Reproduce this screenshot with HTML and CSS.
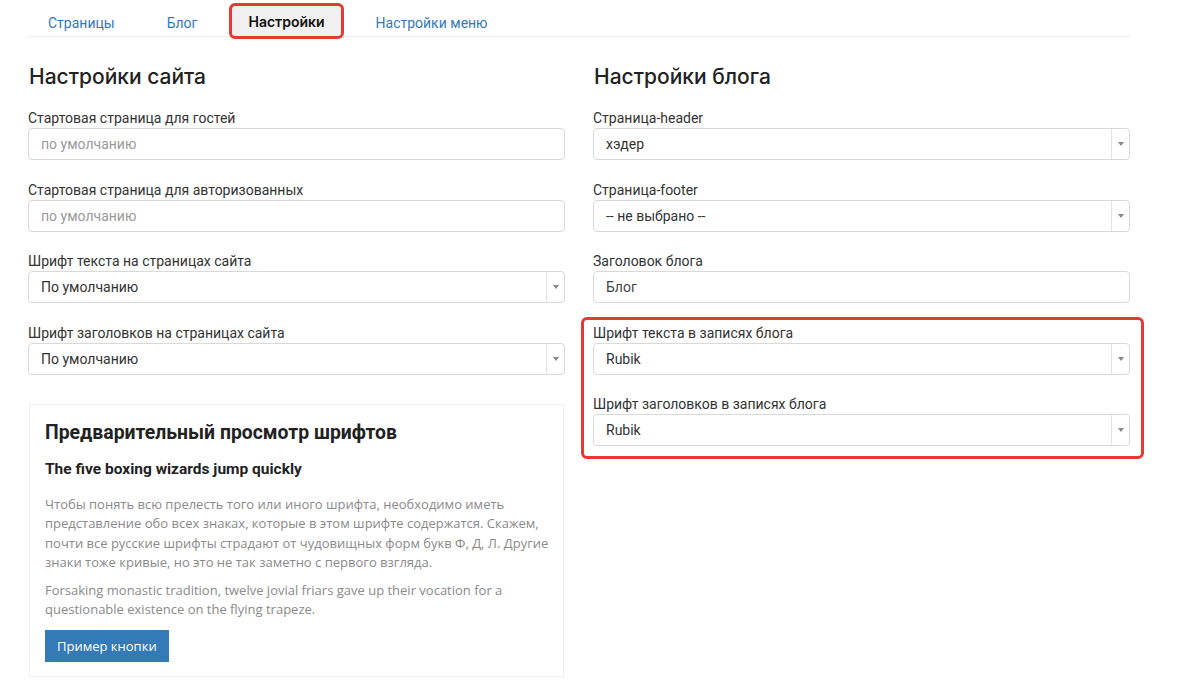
FILE: index.html
```html
<!DOCTYPE html>
<html lang="ru">
<head>
    <meta charset="UTF-8">
    <title>Настройки</title>
    <link rel="stylesheet" href="styles.css">
</head>
<body>
    <div class="container">
        <div class="tabs">
            <a class="tab" href="#">Страницы</a>
            <a class="tab" href="#">Блог</a>
            <a class="tab active" href="#">Настройки</a>
            <a class="tab" href="#">Настройки меню</a>
        </div>

        <div class="columns">
            <div class="column">
                <h2>Настройки сайта</h2>

                <div class="form-group">
                    <label>Стартовая страница для гостей</label>
                    <div class="input placeholder">по умолчанию</div>
                </div>

                <div class="form-group">
                    <label>Стартовая страница для авторизованных</label>
                    <div class="input placeholder">по умолчанию</div>
                </div>

                <div class="form-group">
                    <label>Шрифт текста на страницах сайта</label>
                    <div class="select"><span>По умолчанию</span><i class="arrow"></i></div>
                </div>

                <div class="form-group">
                    <label>Шрифт заголовков на страницах сайта</label>
                    <div class="select"><span>По умолчанию</span><i class="arrow"></i></div>
                </div>

                <div class="preview">
                    <h3>Предварительный просмотр шрифтов</h3>
                    <h4>The five boxing wizards jump quickly</h4>
                    <p>Чтобы понять всю прелесть того или иного шрифта, необходимо иметь представление обо всех знаках, которые в этом шрифте содержатся. Скажем, почти все русские шрифты страдают от чудовищных форм букв Ф, Д, Л. Другие знаки тоже кривые, но это не так заметно с первого взгляда.</p>
                    <p>Forsaking monastic tradition, twelve jovial friars gave up their vocation for a questionable existence on the flying trapeze.</p>
                    <button class="btn">Пример кнопки</button>
                </div>
            </div>

            <div class="column">
                <h2>Настройки блога</h2>

                <div class="form-group">
                    <label>Страница-header</label>
                    <div class="select"><span>хэдер</span><i class="arrow"></i></div>
                </div>

                <div class="form-group">
                    <label>Страница-footer</label>
                    <div class="select"><span>-- не выбрано --</span><i class="arrow"></i></div>
                </div>

                <div class="form-group">
                    <label>Заголовок блога</label>
                    <div class="input value">Блог</div>
                </div>

                <div class="highlight">
                    <div class="form-group">
                        <label>Шрифт текста в записях блога</label>
                        <div class="select"><span>Rubik</span><i class="arrow"></i></div>
                    </div>

                    <div class="form-group">
                        <label>Шрифт заголовков в записях блога</label>
                        <div class="select"><span>Rubik</span><i class="arrow"></i></div>
                    </div>
                </div>
            </div>
        </div>
    </div>
</body>
</html>
```

FILE: styles.css
```css
body {
    margin: 0;
    font-family: Roboto, "Noto Sans", sans-serif;
    font-size: 14px;
    color: #333;
    background: #fff;
}

.container {
    width: 1102px;
    padding-left: 28px;
}

.tabs {
    display: flex;
    gap: 12px;
    padding-top: 3px;
    height: 33px;
    border-bottom: 1px solid #ececec;
}

.tab {
    display: flex;
    align-items: center;
    height: 36px;
    box-sizing: border-box;
    padding: 3px 20px 0;
    color: #337ab7;
    text-decoration: none;
    font-size: 14px;
}

.tab.active {
    background: #f0f0f0;
    color: #111;
    font-family: Inter, sans-serif;
    font-weight: 600;
    border: 3px solid #e53a32;
    border-radius: 6px;
    padding: 1px 16px 0;
}

.columns {
    display: flex;
    gap: 28px;
    margin-top: 26px;
}

.column {
    width: 537px;
}

h2 {
    margin: 0 0 17px 1px;
    font-family: Inter, sans-serif;
    font-size: 21px;
    line-height: 28px;
    font-weight: 500;
    color: #222;
}

.form-group {
    margin-bottom: 19.5px;
}

label {
    display: block;
    line-height: 20px;
    font-size: 14px;
    color: #333;
}

.input, .select {
    height: 32px;
    box-sizing: border-box;
    border: 1px solid #d9d9d9;
    border-radius: 4px;
    display: flex;
    align-items: center;
    font-size: 14px;
}

.input {
    padding: 0 12px;
}

.placeholder {
    color: #9a9a9a;
}

.value {
    color: #444;
}

.select span {
    flex: 1;
    padding: 0 12px;
    color: #333;
}

.arrow {
    width: 17px;
    height: 100%;
    border-left: 1px solid #e2e2e2;
    display: flex;
    align-items: center;
    justify-content: center;
}

.arrow::after {
    content: "";
    border-left: 3px solid transparent;
    border-right: 3px solid transparent;
    border-top: 4px solid #888;
}

.highlight {
    position: relative;
}

.highlight .form-group:last-child {
    margin-bottom: 0;
}

.highlight::after {
    content: "";
    position: absolute;
    top: -6px;
    left: -12px;
    right: -14px;
    bottom: -13px;
    border: 3px solid #e53a32;
    border-radius: 6px;
}

.preview {
    margin-top: 29px;
    margin-left: 1px;
    width: 535px;
    box-sizing: border-box;
    border: 1px solid #eee;
    padding: 16px 8px 14px 15px;
}

.preview h3 {
    margin: 0;
    font-size: 19.4px;
    line-height: 24px;
    font-weight: 700;
    color: #222;
}

.preview h4 {
    margin: 13px 0 0;
    font-size: 15.5px;
    line-height: 22px;
    font-weight: 700;
    color: #222;
}

.preview p {
    margin: 15px 0 0;
    font-family: "Open Sans", sans-serif;
    font-size: 13px;
    line-height: 19.5px;
    color: #8a8a8a;
}

.preview p + p {
    margin-top: 8px;
}

.btn {
    margin-top: 10px;
    height: 32px;
    padding: 0 12px;
    border: none;
    background: #337ab7;
    color: #fff;
    font-family: "Open Sans", sans-serif;
    font-size: 13px;
}
```
